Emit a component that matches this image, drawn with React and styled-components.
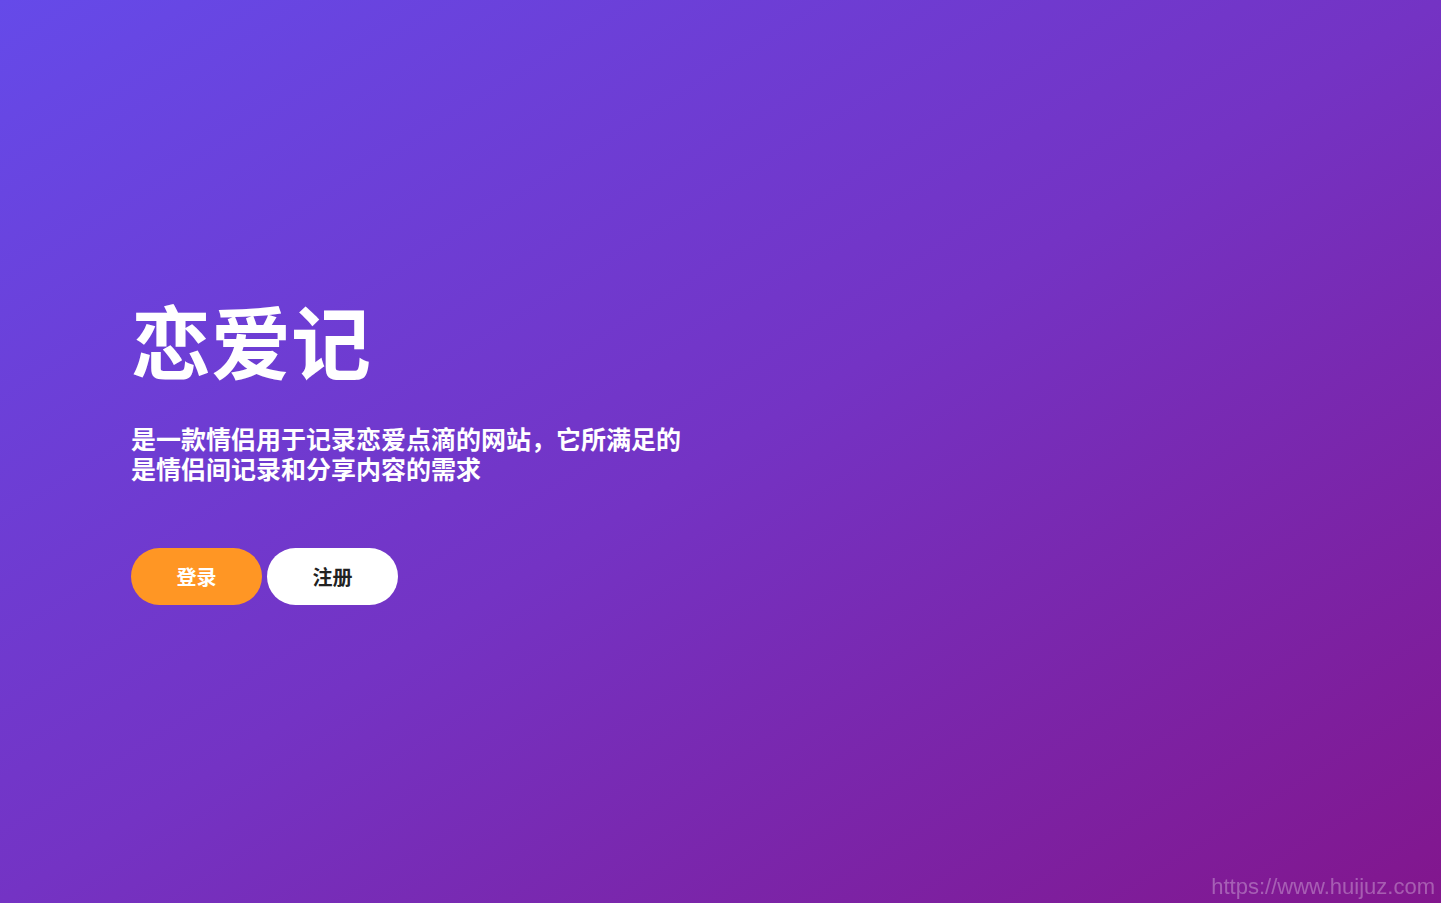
import styled, { createGlobalStyle } from "styled-components";

const GlobalStyle = createGlobalStyle`
  html, body {
    margin: 0;
    padding: 0;
  }
  body {
    font-family: "Liberation Sans", "Noto Sans CJK SC", sans-serif;
    background: #7a2aa8;
  }
`;

const App = () => {
  return (
    <>
      <GlobalStyle />
      <Hero>
        <Content>
          <Title>恋爱记</Title>
          <Intro>是一款情侣用于记录恋爱点滴的网站，它所满足的是情侣间记录和分享内容的需求</Intro>
          <Actions>
            <Button primary>登录</Button>
            <Button>注册</Button>
          </Actions>
        </Content>
      </Hero>
      <More />
      <Watermark>https://www.huijuz.com</Watermark>
    </>
  );
};

export default App;

const Hero = styled.section`
  display: flex;
  align-items: center;
  height: 100vh;
  padding: 0 131px;
  box-sizing: border-box;
  background: linear-gradient(to bottom right, #654ae9 0%, #7433c4 50%, #82168d 100%);
`;

const Content = styled.div`
  display: flex;
  flex-direction: column;
  align-items: flex-start;
  margin-top: -8px;
`;

const Title = styled.h1`
  margin: 0;
  font-family: "Noto Sans CJK SC", sans-serif;
  font-size: 80px;
  font-weight: 700;
  line-height: 96px;
  color: #ffffff;
`;

const Intro = styled.p`
  margin: 37px 0 0;
  width: 560px;
  font-family: "Noto Sans CJK SC", sans-serif;
  font-size: 25px;
  font-weight: 700;
  line-height: 30px;
  color: #ffffff;
`;

const Actions = styled.div`
  display: flex;
  gap: 5px;
  margin-top: 65px;
`;

const Button = styled.button`
  width: 131px;
  height: 57px;
  border: none;
  border-radius: 29px;
  cursor: pointer;
  font-family: "Noto Sans CJK SC", sans-serif;
  font-size: 20px;
  font-weight: 700;
  background: ${(p) => (p.primary ? "#ff9624" : "#ffffff")};
  color: ${(p) => (p.primary ? "#ffffff" : "#222222")};
`;

const More = styled.section`
  height: 680px;
  background: #82168d;
`;

const Watermark = styled.div`
  position: fixed;
  right: 6px;
  bottom: 3px;
  white-space: nowrap;
  font-family: "Liberation Sans", Arial, sans-serif;
  font-size: 22px;
  color: rgba(255, 255, 255, 0.3);
  pointer-events: none;
`;
